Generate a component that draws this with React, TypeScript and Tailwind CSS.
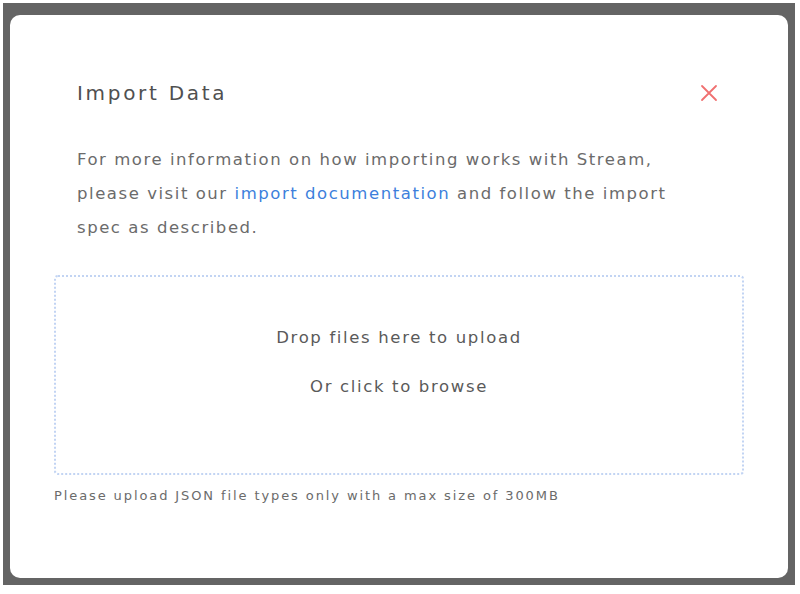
import React from "react";

const App = () => {
  return (
    <div className="w-[800px] h-[594px] bg-white overflow-hidden">
      <div className="ml-[3px] mt-[3px] w-[792px] h-[582px] bg-[#646464] pt-[12px] px-[7px] pb-[7px]">
        <div
          className="w-full h-full bg-white rounded-[10px] px-[44px] pt-[64px]"
          style={{ fontFamily: '"DejaVu Sans", sans-serif' }}
        >
          <div className="flex items-center justify-between pl-[23px] pr-[26px]">
            <h2 className="text-[20px] leading-[28px] text-[#505050] tracking-[2.7px]">
              Import Data
            </h2>
            <button className="w-[18px] h-[18px] flex items-center justify-center">
              <svg width="18" height="18" viewBox="0 0 18 18">
                <path
                  d="M2 2 L16 16 M16 2 L2 16"
                  stroke="#f07070"
                  strokeWidth="1.8"
                  strokeLinecap="round"
                />
              </svg>
            </button>
          </div>
          <p className="mt-[36px] pl-[23px] text-[16.5px] leading-[34px] text-[#6b6b6b] tracking-[1.55px]">
            For more information on how importing works with Stream,
            <br />
            please visit our{" "}
            <span className="text-[#3d7fdc]">import documentation</span> and
            follow the import
            <br />
            spec as described.
          </p>
          <div className="mt-[30px] h-[200px] border-2 border-dotted border-[#c2d4f3] rounded-[4px] flex flex-col items-center pt-[47px]">
            <p className="text-[16.5px] leading-[28px] text-[#5a5a5a] tracking-[1.65px]">
              Drop files here to upload
            </p>
            <p className="mt-[21px] text-[16.5px] leading-[28px] text-[#5a5a5a] tracking-[1.65px]">
              Or click to browse
            </p>
          </div>
          <p className="mt-[12px] text-[13px] leading-[18px] text-[#6b6b6b] tracking-[1.9px]">
            Please upload JSON file types only with a max size of 300MB
          </p>
        </div>
      </div>
    </div>
  );
};

export default App;
